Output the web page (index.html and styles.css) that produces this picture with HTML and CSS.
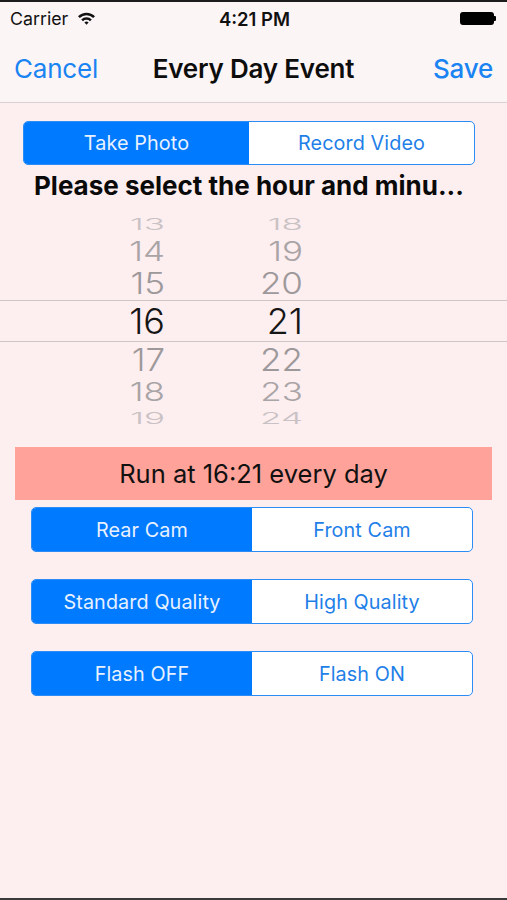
FILE: index.html
```html
<!DOCTYPE html>
<html>
<head>
<meta charset="utf-8">
<link rel="stylesheet" href="styles.css">
</head>
<body>
<div class="screen">
  <header class="header">
    <div class="status">
      <div class="status-left">
        <span class="carrier">Carrier</span>
        <svg class="wifi" width="19" height="14" viewBox="0 0 19 14">
          <path d="M1 5.2 A12 12 0 0 1 18 5.2 L16.2 7 A9.5 9.5 0 0 0 2.8 7 Z" fill="#111"/>
          <path d="M4.2 8.4 A7.5 7.5 0 0 1 14.8 8.4 L13 10.2 A5 5 0 0 0 6 10.2 Z" fill="#111"/>
          <path d="M7.4 11.6 A3 3 0 0 1 11.6 11.6 L9.5 13.7 Z" fill="#111"/>
        </svg>
      </div>
      <div class="time">4:21 PM</div>
      <div class="status-right">
        <div class="battery"></div>
        <div class="battery-nub"></div>
      </div>
    </div>
    <nav class="nav">
      <span class="nav-btn nav-cancel">Cancel</span>
      <span class="nav-title">Every Day Event</span>
      <span class="nav-btn nav-save">Save</span>
    </nav>
  </header>

  <main class="content">
    <div class="top-group">
      <div class="seg seg-top">
        <div class="seg-item active">Take Photo</div>
        <div class="seg-item">Record Video</div>
      </div>
      <div class="prompt">Please select the hour and minu...</div>
    </div>

    <div class="picker">
      <div class="pk-section">
        <div class="pk-col pk-hour">
          <div class="pk-row r-far"><span>13</span></div>
          <div class="pk-row r-mid"><span>14</span></div>
          <div class="pk-row r-near"><span>15</span></div>
        </div>
        <div class="pk-col pk-min">
          <div class="pk-row r-far"><span>18</span></div>
          <div class="pk-row r-mid"><span>19</span></div>
          <div class="pk-row r-near"><span>20</span></div>
        </div>
      </div>
      <div class="pk-section pk-band">
        <div class="pk-col pk-hour">
          <div class="pk-row r-sel"><span>16</span></div>
        </div>
        <div class="pk-col pk-min">
          <div class="pk-row r-sel"><span>21</span></div>
        </div>
      </div>
      <div class="pk-section">
        <div class="pk-col pk-hour">
          <div class="pk-row r-near2"><span>17</span></div>
          <div class="pk-row r-mid2"><span>18</span></div>
          <div class="pk-row r-far2"><span>19</span></div>
        </div>
        <div class="pk-col pk-min">
          <div class="pk-row r-near2"><span>22</span></div>
          <div class="pk-row r-mid2"><span>23</span></div>
          <div class="pk-row r-far2"><span>24</span></div>
        </div>
      </div>
    </div>

    <div class="banner">Run at 16:21 every day</div>

    <div class="options">
      <div class="seg">
        <div class="seg-item active">Rear Cam</div>
        <div class="seg-item">Front Cam</div>
      </div>
      <div class="seg">
        <div class="seg-item active">Standard Quality</div>
        <div class="seg-item">High Quality</div>
      </div>
      <div class="seg">
        <div class="seg-item active">Flash OFF</div>
        <div class="seg-item">Flash ON</div>
      </div>
    </div>
  </main>
</div>
</body>
</html>
```

FILE: styles.css
```css
* { box-sizing: border-box; }
html, body { margin: 0; padding: 0; }
body {
  font-family: Inter, "Liberation Sans", sans-serif;
  background: #fdeef0;
  color: #111;
}
.screen {
  width: 507px;
  height: 900px;
  display: flex;
  flex-direction: column;
  border-top: 2px solid #1c1c1c;
  border-bottom: 2px solid #3a3a3a;
  overflow: hidden;
}
.header {
  background: #fcf5f6;
  border-bottom: 1px solid #d9d1d3;
  height: 101px;
  flex: none;
}
.status {
  height: 33px;
  display: flex;
  align-items: center;
  justify-content: space-between;
  padding: 0 10px 0 10px;
}
.status-left {
  display: flex;
  align-items: center;
  gap: 9px;
  width: 120px;
}
.carrier {
  font-size: 17.8px;
  font-weight: 400;
  color: #111;
}
.wifi { margin-top: -2px; }
.time {
  font-size: 18.5px;
  font-weight: 600;
  color: #111;
  margin-left: 2px;
}
.status-right {
  width: 120px;
  display: flex;
  justify-content: flex-end;
  align-items: center;
}
.battery {
  width: 34px;
  height: 13px;
  border-radius: 3px;
  background: #000;
}
.battery-nub {
  width: 2px;
  height: 5px;
  background: #000;
  border-radius: 0 1px 1px 0;
  margin-right: 1px;
}
.nav {
  height: 67px;
  display: grid;
  grid-template-columns: 1fr auto 1fr;
  align-items: center;
  padding: 0 14px 0 14px;
}
.nav-btn {
  font-size: 26px;
  color: #1a84f2;
  font-weight: 400;
  letter-spacing: -0.2px;
}
.nav-cancel { justify-self: start; }
.nav-save { font-weight: 500; justify-self: end; }
.nav-title {
  font-size: 26px;
  font-weight: 600;
  color: #0d0d0d;
  letter-spacing: -0.2px;
}
.content {
  flex: 1;
  display: flex;
  flex-direction: column;
  padding-top: 18px;
}
.top-group {
  margin: 0 32px 0 23px;
  display: flex;
  flex-direction: column;
}
.seg {
  display: flex;
  height: 45px;
  border: 1.5px solid #2b8cf5;
  border-radius: 5px;
  overflow: hidden;
  background: #fff;
}
.seg-top { height: 44px; }
.seg-item {
  flex: 1;
  display: flex;
  align-items: center;
  justify-content: center;
  font-size: 19.8px;
  color: #1f7fe8;
  letter-spacing: 0.1px;
}
.seg-item.active {
  background: #007aff;
  color: #e8f1ff;
}
.prompt {
  height: 40px;
  display: flex;
  align-items: center;
  justify-content: center;
  font-size: 26px;
  font-weight: 700;
  color: #0a0a0a;
  letter-spacing: 0;
  white-space: nowrap;
}
.picker {
  margin-top: 7px;
  display: flex;
  flex-direction: column;
}
.pk-section {
  display: flex;
}
.pk-band {
  border-top: 1px solid #cfc6c8;
  border-bottom: 1px solid #cfc6c8;
}
.pk-col {
  display: flex;
  flex-direction: column;
}
.pk-hour { width: 165px; }
.pk-min { width: 138px; }
.pk-row {
  display: flex;
  align-items: center;
  justify-content: flex-end;
  font-size: 35px;
  font-weight: 300;
  line-height: 1;
  color: #9b9799;
}
.pk-row span { display: block; }
.r-far { height: 24px; color: #c9c2c4; }
.r-far span { transform: scaleY(0.45); }
.r-mid { height: 30px; color: #a9a4a6; }
.r-mid span { transform: scaleY(0.76); }
.r-near { height: 34px; color: #9d999b; }
.r-near span { transform: scaleY(0.84); }
.r-sel { height: 40px; color: #161616; font-size: 36px; }
.r-near2 { height: 35px; color: #9d999b; }
.r-near2 span { transform: scaleY(0.88); }
.r-mid2 { height: 29px; color: #a9a4a6; }
.r-mid2 span { transform: scaleY(0.74); }
.r-far2 { height: 24px; color: #c9c2c4; }
.r-far2 span { transform: scaleY(0.46); }
.banner {
  margin: 17px 15px 0 15px;
  height: 53px;
  background: #ffa39a;
  display: flex;
  align-items: center;
  justify-content: center;
  font-size: 25.5px;
  color: #111;
}
.options {
  margin: 7px 34px 0 31px;
  display: flex;
  flex-direction: column;
  gap: 27px;
}
```
